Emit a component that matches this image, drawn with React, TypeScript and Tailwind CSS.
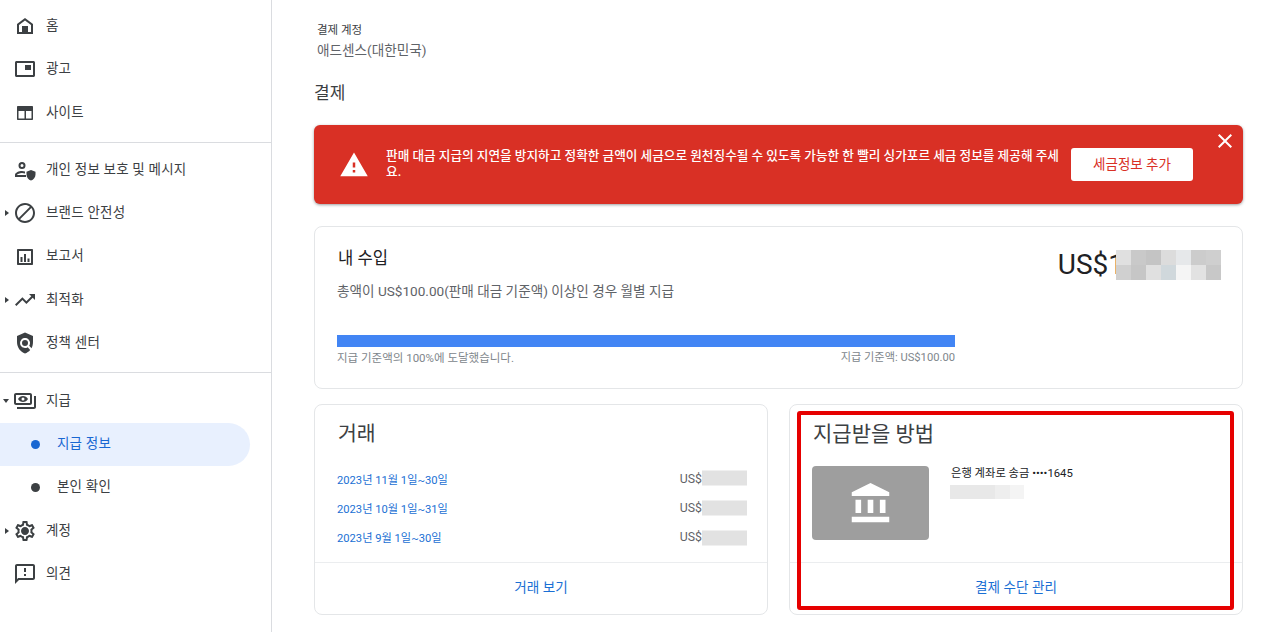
const icons: Record<string, string> = {
  home: "M12 4l-8 6v10h16V10l-8-6zm6 14h-3v-6H9v6H6v-7l6-4.5 6 4.5v7z",
  ads: "M3.5 4h17c.8 0 1.5.7 1.5 1.5v13c0 .8-.7 1.5-1.5 1.5h-17c-.8 0-1.5-.7-1.5-1.5v-13C2 4.7 2.7 4 3.5 4zM4 6v12h16V6H4zm8 2h6v5h-6V8z",
  sites: "M5 5h14c.6 0 1 .4 1 1v12c0 .6-.4 1-1 1H5c-.6 0-1-.4-1-1V6c0-.6.4-1 1-1zm.5 5v7.5h6V10h-6zm7.5 0v7.5h5.5V10H13z",
  privacy: "M9 4a3.5 3.5 0 1 0 0 7 3.5 3.5 0 0 0 0-7zm0 2a1.5 1.5 0 1 1 0 3 1.5 1.5 0 0 1 0-3zM9 13c-3 0-7 1.5-7 4v2h11v-2H4c.2-.9 2.8-2 5-2 1 0 2 .2 3 .5v-2c-1-.3-2-.5-3-.5zM18 12l-4.5 1.8v2.7c0 2.8 1.9 5.3 4.5 6 2.6-.7 4.5-3.2 4.5-6v-2.7L18 12z",
  block: "M12 2C6.48 2 2 6.48 2 12s4.48 10 10 10 10-4.48 10-10S17.52 2 12 2zM4 12c0-4.42 3.58-8 8-8 1.85 0 3.55.63 4.9 1.69L5.69 16.9C4.63 15.55 4 13.85 4 12zm8 8c-1.85 0-3.55-.63-4.9-1.69L18.31 7.1C19.37 8.45 20 10.15 20 12c0 4.42-3.58 8-8 8z",
  reports: "M5 4h14c.6 0 1 .4 1 1v14c0 .6-.4 1-1 1H5c-.6 0-1-.4-1-1V5c0-.6.4-1 1-1zm1 2v12h12V6H6zm1.5 6h2v5h-2v-5zm3.5-3h2v8h-2V9zm3.5 4.5h2V17h-2v-3.5z",
  trending: "M16 6l2.29 2.29-4.88 4.88-4-4L2 16.59 3.41 18l6-6 4 4 6.3-6.29L22 12V6z",
  policy: "M20 5l-8-3.5L4 5v6c0 5.2 3.4 10 8 11.5 2-.6 3.8-1.9 5.2-3.5l-2.5-2.8c-1.9 1.3-4.5 1.1-6.2-.6-1.95-1.95-1.95-5.12 0-7.07 1.95-1.95 5.12-1.95 7.07 0 1.71 1.71 1.92 4.35.64 6.29l2.3 2.5C19.4 15.7 20 13.4 20 11V5zM12 9a3 3 0 1 0 0 6 3 3 0 0 0 0-6z",
  payments: "M19 14V6c0-1.1-.9-2-2-2H3c-1.1 0-2 .9-2 2v8c0 1.1.9 2 2 2h14c1.1 0 2-.9 2-2zm-2 0H3V6h14v8zm-7-7C8 7 6 8.3 5 10c1 1.7 3 3 5 3s4-1.3 5-3c-1-1.7-3-3-5-3zm0 4.5a1.5 1.5 0 1 1 0-3 1.5 1.5 0 0 1 0 3zM23 7v11c0 1.1-.9 2-2 2H4v-2h17V7h2z",
  settings: "M19.43 12.98c.04-.32.07-.64.07-.98 0-.34-.03-.66-.07-.98l2.11-1.65c.19-.15.24-.42.12-.64l-2-3.46c-.09-.16-.26-.25-.44-.25-.06 0-.12.01-.17.03l-2.49 1c-.52-.4-1.08-.73-1.69-.98l-.38-2.65C14.46 2.18 14.25 2 14 2h-4c-.25 0-.46.18-.49.42l-.38 2.65c-.61.25-1.17.59-1.69.98l-2.49-1c-.06-.02-.12-.03-.18-.03-.17 0-.34.09-.43.25l-2 3.46c-.13.22-.07.49.12.64l2.11 1.65c-.04.32-.07.65-.07.98 0 .33.03.66.07.98l-2.11 1.65c-.19.15-.24.42-.12.64l2 3.46c.09.16.26.25.44.25.06 0 .12-.01.17-.03l2.49-1c.52.4 1.08.73 1.69.98l.38 2.65c.03.24.24.42.49.42h4c.25 0 .46-.18.49-.42l.38-2.65c.61-.25 1.17-.59 1.69-.98l2.49 1c.06.02.12.03.18.03.17 0 .34-.09.43-.25l2-3.46c.12-.22.07-.49-.12-.64l-2.11-1.65zm-1.98-1.71c.04.31.05.52.05.73 0 .21-.02.43-.05.73l-.14 1.13.89.7 1.08.84-.7 1.21-1.27-.51-1.04-.42-.9.68c-.43.32-.84.56-1.25.73l-1.06.43-.16 1.13-.2 1.35h-1.4l-.19-1.35-.16-1.13-1.06-.43c-.43-.18-.83-.41-1.23-.71l-.91-.7-1.06.43-1.27.51-.7-1.21 1.08-.84.89-.7-.14-1.13c-.03-.31-.05-.54-.05-.74s.02-.43.05-.73l.14-1.13-.89-.7-1.08-.84.7-1.21 1.27.51 1.04.42.9-.68c.43-.32.84-.56 1.25-.73l1.06-.43.16-1.13.2-1.35h1.39l.19 1.35.16 1.13 1.06.43c.43.18.83.41 1.23.71l.91.7 1.06-.43 1.27-.51.7 1.21-1.07.85-.89.7.14 1.13zM12 8c-2.21 0-4 1.79-4 4s1.79 4 4 4 4-1.79 4-4-1.79-4-4-4z",
  feedback: "M20 2H4c-1.1 0-1.99.9-1.99 2L2 22l4-4h14c1.1 0 2-.9 2-2V4c0-1.1-.9-2-2-2zm0 14H5.17l-.59.59-.58.58V4h16v12zm-9-4h2v2h-2zm0-6h2v4h-2z",
  warning: "M1 21h22L12 2 1 21zm12-3h-2v-2h2v2zm0-4h-2v-4h2v4z",
  bank: "M4 10h3v7H4zM10.5 10h3v7h-3zM2 19h20v3H2zM17 10h3v7h-3zM12 1L2 6v2h20V6z",
  close: "M19 6.41L17.59 5 12 10.59 6.41 5 5 6.41 10.59 12 5 17.59 6.41 19 12 13.41 17.59 19 19 17.59 13.41 12z",
};

function Icon({ name, className }: { name: string; className: string }) {
  return (
    <svg viewBox="0 0 24 24" className={className} fill="currentColor" fillRule="evenodd">
      <path d={icons[name]} />
    </svg>
  );
}

function NavRow({ icon, label, caret }: { icon: string; label: string; caret?: "right" | "down" }) {
  return (
    <div className="flex h-[43.33px] items-center text-[13.5px] tracking-[0.2px] text-[#3c4043]">
      <div className="flex w-[13px] justify-end pr-[4px]">
        {caret === "right" && (
          <span className="h-0 w-0 border-y-[3px] border-l-[4px] border-y-transparent border-l-[#3c4043]" />
        )}
        {caret === "down" && (
          <span className="h-0 w-0 border-x-[3px] border-t-[4px] border-x-transparent border-t-[#3c4043]" />
        )}
      </div>
      <Icon name={icon} className="h-6 w-6 text-[#3c4043]" />
      <span className="ml-[9px] -translate-y-[1px]">{label}</span>
    </div>
  );
}

function SubRow({ label, active }: { label: string; active?: boolean }) {
  return (
    <div
      className={`flex h-[43.33px] w-[250px] items-center rounded-r-[22px] pl-[31px] text-[13.5px] tracking-[0.2px] ${
        active ? "bg-[#e8f0fe] text-[#1967d2]" : "text-[#3c4043]"
      }`}
    >
      <span className={`h-[9px] w-[9px] rounded-full ${active ? "bg-[#1967d2]" : "bg-[#3c4043]"}`} />
      <span className="ml-[17px] -translate-y-[1px]">{label}</span>
    </div>
  );
}

function Sidebar() {
  return (
    <aside className="h-[632px] w-[272px] shrink-0 border-r border-[#dadce0]">
      <div className="pt-[4.5px] pb-[7.5px]">
        <NavRow icon="home" label="홈" />
        <NavRow icon="ads" label="광고" />
        <NavRow icon="sites" label="사이트" />
      </div>
      <div className="border-t border-[#dadce0] pt-[5.3px] pb-[7px]">
        <NavRow icon="privacy" label="개인 정보 보호 및 메시지" />
        <NavRow icon="block" label="브랜드 안전성" caret="right" />
        <NavRow icon="reports" label="보고서" />
        <NavRow icon="trending" label="최적화" caret="right" />
        <NavRow icon="policy" label="정책 센터" />
      </div>
      <div className="border-t border-[#dadce0] pt-[6.3px]">
        <NavRow icon="payments" label="지급" caret="down" />
        <SubRow label="지급 정보" active />
        <SubRow label="본인 확인" />
        <NavRow icon="settings" label="계정" caret="right" />
        <NavRow icon="feedback" label="의견" />
      </div>
    </aside>
  );
}

const mosaic = [
  "bg-[#e0e0e0]", "bg-[#c9c9c9]", "bg-[#c4c4c4]", "bg-[#dcdcdc]", "bg-[#e6e8ea]", "bg-[#cccccc]", "bg-[#cfcfcf]",
  "bg-[#d0d0d0]", "bg-[#c6c6c6]", "bg-[#e0e0e0]", "bg-[#d0d8dc]", "bg-[#f5f5f5]", "bg-[#e2e2e2]", "bg-[#c8c8c8]",
];

const transactions = [
  { period: "2023년 11월 1일~30일", blurShift: "-translate-y-[2.5px]" },
  { period: "2023년 10월 1일~31일", blurShift: "-translate-y-[1.5px]" },
  { period: "2023년 9월 1일~30일", blurShift: "-translate-y-[0.5px]" },
];

function IncomeCard() {
  return (
    <section className="mt-[22px] h-[163px] rounded-[8px] border border-[#e4e6e8] bg-white pt-[21px] pr-[21px] pl-[22px]">
      <div className="flex items-start justify-between">
        <div>
          <h2 className="pl-[1px] text-[16.6px] leading-[22px] text-[#202124]">내 수입</h2>
          <p className="mt-[12px] text-[13.6px] leading-[18px] text-[#5f6368]">
            총액이 US$100.00(판매 대금 기준액) 이상인 경우 월별 지급
          </p>
        </div>
        <div className="flex items-center pt-[2px]">
          <span className="text-[28px] leading-[30px] text-[#202124]">US$1</span>
          <div className="-ml-[8px] grid h-[30px] w-[105px] grid-cols-7">
            {mosaic.map((color, i) => (
              <span key={i} className={color} />
            ))}
          </div>
        </div>
      </div>
      <div className="mt-[35px] w-[618px]">
        <div className="h-3 bg-[#4285f4]" />
        <div className="mt-[4px] flex justify-between leading-[14px] text-[#80868b]">
          <span className="text-[11.5px]">지급 기준액의 100%에 도달했습니다.</span>
          <span className="text-[11.2px]">지급 기준액: US$100.00</span>
        </div>
      </div>
    </section>
  );
}

function TransactionsCard() {
  return (
    <section className="flex h-[211px] flex-col rounded-[8px] border border-[#e4e6e8] bg-white">
      <h2 className="pt-[15px] pl-[23px] text-[20.5px] leading-[28px] text-[#3c4043]">거래</h2>
      <div className="mt-[23px] flex flex-col gap-[11px] pr-[20px] pl-[22px]">
        {transactions.map(({ period, blurShift }) => (
          <div key={period} className="flex h-[18px] items-center justify-between">
            <span className="translate-y-[1px] text-[11.2px] text-[#1a6fd4]">{period}</span>
            <div className="flex items-center text-[12.3px] text-[#5f6368]">
              <span className="-translate-y-[1px]">US$</span>
              <span className={`h-[15px] w-[45px] bg-[#e2e2e2] ${blurShift}`} />
            </div>
          </div>
        ))}
      </div>
      <div className="mt-auto flex h-[52px] items-center justify-center border-t border-[#ebedef] pb-[2px] text-[13.6px] text-[#1a6fd4]">
        거래 보기
      </div>
    </section>
  );
}

function PayoutCard() {
  return (
    <section className="relative flex h-[211px] flex-col rounded-[8px] border border-[#e4e6e8] bg-white">
      <h2 className="pt-[15px] pl-[23px] text-[21px] leading-[28px] text-[#3c4043]">지급받을 방법</h2>
      <div className="mt-[18px] flex pl-[22px]">
        <div className="flex h-[74px] w-[117px] items-center justify-center rounded-[4px] bg-[#9e9e9e]">
          <Icon name="bank" className="h-[45px] w-[45px] text-white" />
        </div>
        <div className="ml-[21px] pt-[1px]">
          <p className="pl-[1px] text-[11.3px] leading-[14px] text-[#202124]">은행 계좌로 송금 ••••1645</p>
          <div className="mt-[4px] flex h-[14px] w-[74px]">
            <span className="w-[45px] bg-[#e8e8e8]" />
            <span className="w-[15px] bg-[#eeeeee]" />
            <span className="w-[14px] bg-[#f4f4f4]" />
          </div>
        </div>
      </div>
      <div className="mt-auto flex h-[52px] items-center justify-center border-t border-[#ebedef] pb-[2px] text-[13.6px] text-[#1a6fd4]">
        결제 수단 관리
      </div>
      {/* annotation drawn over the screenshot */}
      <div className="absolute top-[6px] left-[7px] h-[199px] w-[437px] rounded-[3px] border-4 border-[#e60000]" />
    </section>
  );
}

export default function App() {
  return (
    <div className="flex h-[632px] w-[1278px] overflow-hidden bg-white font-['Roboto','Noto_Sans_CJK_KR',sans-serif]">
      <Sidebar />
      <main className="w-[1006px] pt-[23px] pl-[42px]">
        <div className="w-[929px]">
          <div className="pl-[3px]">
            <p className="text-[11.5px] leading-[14px] text-[#3c4043]">결제 계정</p>
            <p className="mt-[3px] text-[13.6px] leading-[20px] text-[#5f6368]">애드센스(대한민국)</p>
          </div>
          <h1 className="mt-[21px] text-[17px] leading-[24px] text-[#3c4043]">결제</h1>

          <div className="relative mt-[20px] flex h-[79px] items-center rounded-[6px] bg-[#d93025] pl-[25px] text-white shadow-[0_1px_3px_rgba(60,64,67,0.5)]">
            <Icon name="warning" className="h-[30px] w-[30px] shrink-0" />
            <p className="ml-[17px] w-[678px] shrink-0 -translate-y-[1px] text-[12.65px] leading-[16px] font-medium">
              판매 대금 지급의 지연을 방지하고 정확한 금액이 세금으로 원천징수될 수 있도록 가능한 한 빨리 싱가포르 세금 정보를 제공해 주세요.
            </p>
            <button className="ml-[7px] flex h-[33px] w-[122px] items-center justify-center rounded-[3px] bg-white text-[13.5px] text-[#d93025]">
              세금정보 추가
            </button>
            <Icon name="close" className="absolute top-[4px] right-[6px] h-[24px] w-[24px]" />
          </div>

          <IncomeCard />

          <div className="mt-[15px] grid grid-cols-2 gap-[21px]">
            <TransactionsCard />
            <PayoutCard />
          </div>
        </div>
      </main>
    </div>
  );
}
